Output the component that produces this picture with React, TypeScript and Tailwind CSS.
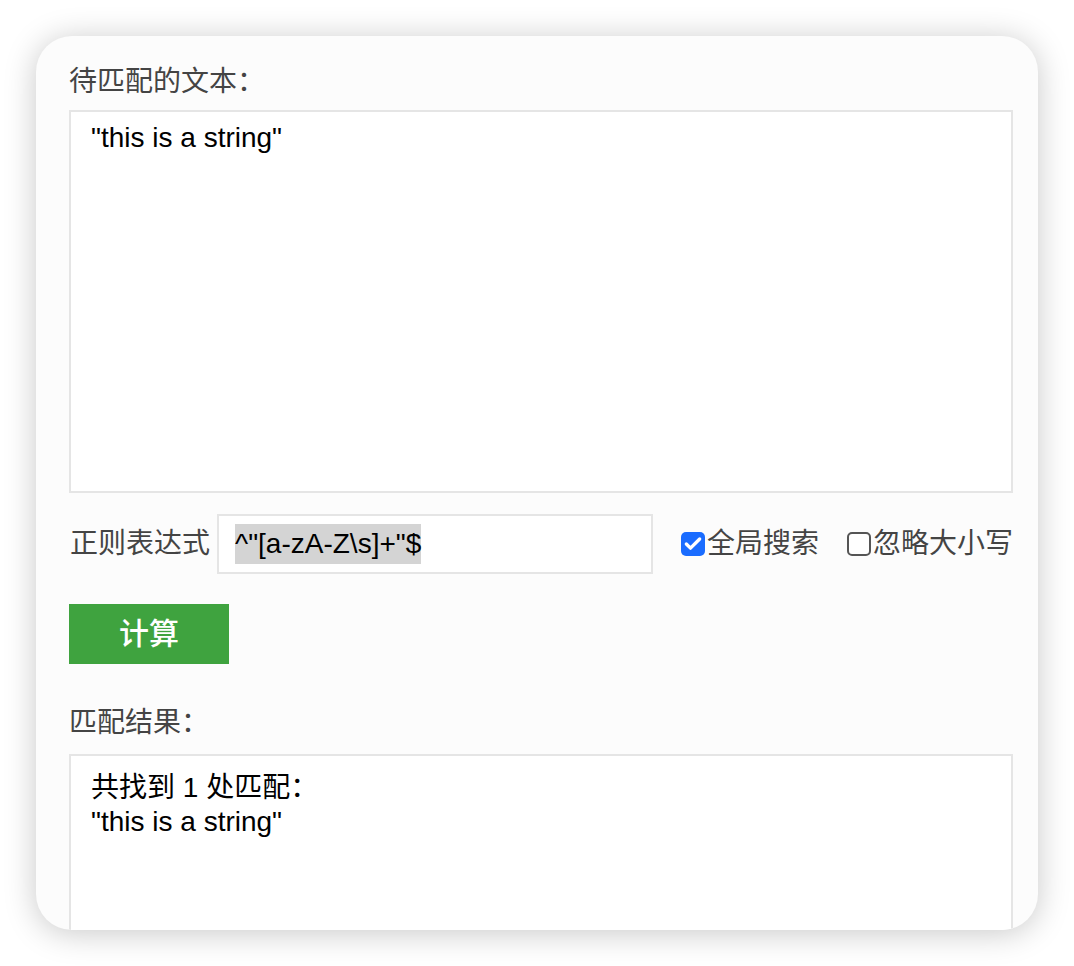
import { Check } from "lucide-react";

const font = "font-['Liberation_Sans','Noto_Sans_CJK_SC',sans-serif]";

function Checkbox({ checked, label }: { checked: boolean; label: string }) {
  return (
    <label className="flex shrink-0 items-center gap-[2px] whitespace-nowrap">
      {checked ? (
        <span className="flex size-[24px] items-center justify-center rounded-[5px] bg-[#1a6cff]">
          <Check className="size-[20px] text-white" strokeWidth={4} />
        </span>
      ) : (
        <span className="size-[24px] rounded-[5px] border-2 border-[#555] bg-white" />
      )}
      <span>{label}</span>
    </label>
  );
}

export default function App() {
  return (
    <div className={`min-h-[966px] bg-white px-[36px] pt-[36px] ${font}`}>
      <div className="h-[894px] w-[1002px] overflow-hidden rounded-[36px] bg-[#fcfcfc] pl-[33px] pr-[25px] pt-[29px] text-[28px] leading-[34px] text-[#444] shadow-[0_3px_32px_rgba(0,0,0,0.22)]">
        <div>待匹配的文本：</div>
        <div className="mt-[11px] h-[383px] w-[944px] border-2 border-[#e5e5e5] bg-white pl-[20px] pt-[9px] text-black">
          "this is a string"
        </div>

        <div className="mt-[21px] flex h-[60px] items-center whitespace-nowrap">
          <span className="w-[148px] shrink-0 pl-px">正则表达式</span>
          <div className="flex h-[60px] w-[436px] shrink-0 items-center border-2 border-[#e5e5e5] bg-white pl-[16px]">
            <span className="bg-[#d4d4d4] leading-[40px] text-black">^"[a-zA-Z\s]+"$</span>
          </div>
          <div className="ml-[28px] flex items-center gap-[28px]">
            <Checkbox checked label="全局搜索" />
            <Checkbox checked={false} label="忽略大小写" />
          </div>
        </div>

        <button
          type="button"
          className="mt-[30px] flex h-[60px] w-[160px] items-center justify-center bg-[#3fa33f] text-[30px] font-medium text-white"
        >
          计算
        </button>

        <div className="mt-[42px]">匹配结果：</div>
        <div className="mt-[14px] h-[300px] w-[944px] border-2 border-[#e5e5e5] bg-white pl-[20px] pt-[15px] text-black">
          <div>共找到 1 处匹配：</div>
          <div>"this is a string"</div>
        </div>
      </div>
    </div>
  );
}
